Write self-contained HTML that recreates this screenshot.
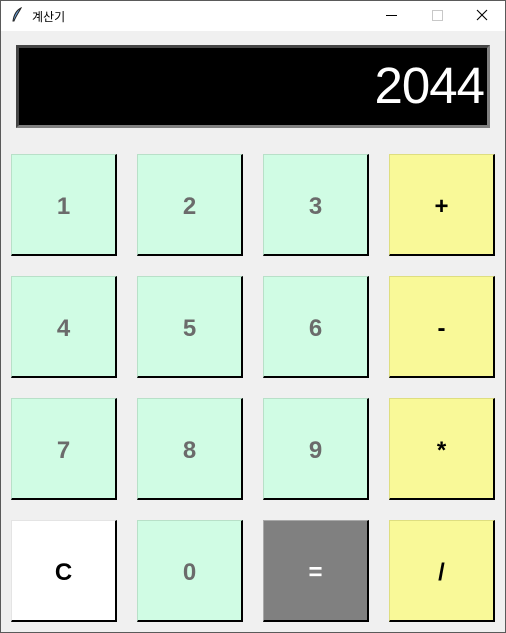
<!DOCTYPE html>
<html><head><meta charset="utf-8"><style>
body{margin:0;width:506px;height:633px;background:#f0f0f0;position:relative;overflow:hidden;font-family:"Liberation Sans","Noto Sans CJK KR",sans-serif}
.win{position:absolute;left:0;top:0;width:504px;height:631px;border:1px solid #5a5a5a}
.tb{position:absolute;left:1px;top:1px;width:504px;height:30px;background:#fff}
.title{position:absolute;left:31px;top:7px;font-size:12px;color:#000}
.disp{position:absolute;left:16px;top:45px;width:468px;height:77px;background:#000;border-top:3px solid #454545;border-left:3px solid #454545;border-right:3px solid #808080;border-bottom:3px solid #808080}
.disp span{position:absolute;right:3px;top:12px;color:#fff;font-size:51px;line-height:1;letter-spacing:-1px}
.b{position:absolute;width:106px;height:102px;box-sizing:border-box;border-top:1px solid #b8e0c8;border-left:1px solid #b8e0c8;border-right:2px solid #000;border-bottom:2px solid #000;background:#d0fce4;color:#6b6b6b;font-weight:bold;font-size:24px;display:flex;align-items:center;justify-content:center;padding-top:4px}
.y{background:#f9f998;border-color:#dede80 #000 #000 #dede80;color:#000}
.w{background:#fff;border-color:#e4e4e4 #000 #000 #e4e4e4;color:#000}
.g{background:#808080;border-color:#a8a8a8 #000 #000 #a8a8a8;color:#fff}
</style></head><body>
<div class="win"></div>
<div class="tb">
<svg style="position:absolute;left:10px;top:6px" width="12" height="16" viewBox="0 0 12 16"><path d="M10 1 C6 3 3 7 2 14 L3 14 C5 9 8 5 10 1Z" fill="#6aa0d8" stroke="#222" stroke-width="1"/></svg>
<span class="title">계산기</span>
<div style="position:absolute;left:385px;top:14px;width:11px;height:1px;background:#000"></div>
<div style="position:absolute;left:431px;top:9px;width:9px;height:9px;border:1px solid #c8c8c8"></div>
<svg style="position:absolute;left:475px;top:8px" width="12" height="12"><path d="M1 1L11 11M11 1L1 11" stroke="#000" stroke-width="1.1"/></svg>
</div>
<div class="disp"><span>2044</span></div>
<div class="b" style="left:11px;top:154px">1</div>
<div class="b" style="left:137px;top:154px">2</div>
<div class="b" style="left:263px;top:154px">3</div>
<div class="b y" style="left:389px;top:154px">+</div>
<div class="b" style="left:11px;top:276px">4</div>
<div class="b" style="left:137px;top:276px">5</div>
<div class="b" style="left:263px;top:276px">6</div>
<div class="b y" style="left:389px;top:276px">-</div>
<div class="b" style="left:11px;top:398px">7</div>
<div class="b" style="left:137px;top:398px">8</div>
<div class="b" style="left:263px;top:398px">9</div>
<div class="b y" style="left:389px;top:398px">*</div>
<div class="b w" style="left:11px;top:520px">C</div>
<div class="b" style="left:137px;top:520px">0</div>
<div class="b g" style="left:263px;top:520px">=</div>
<div class="b y" style="left:389px;top:520px">/</div>
</body></html>
